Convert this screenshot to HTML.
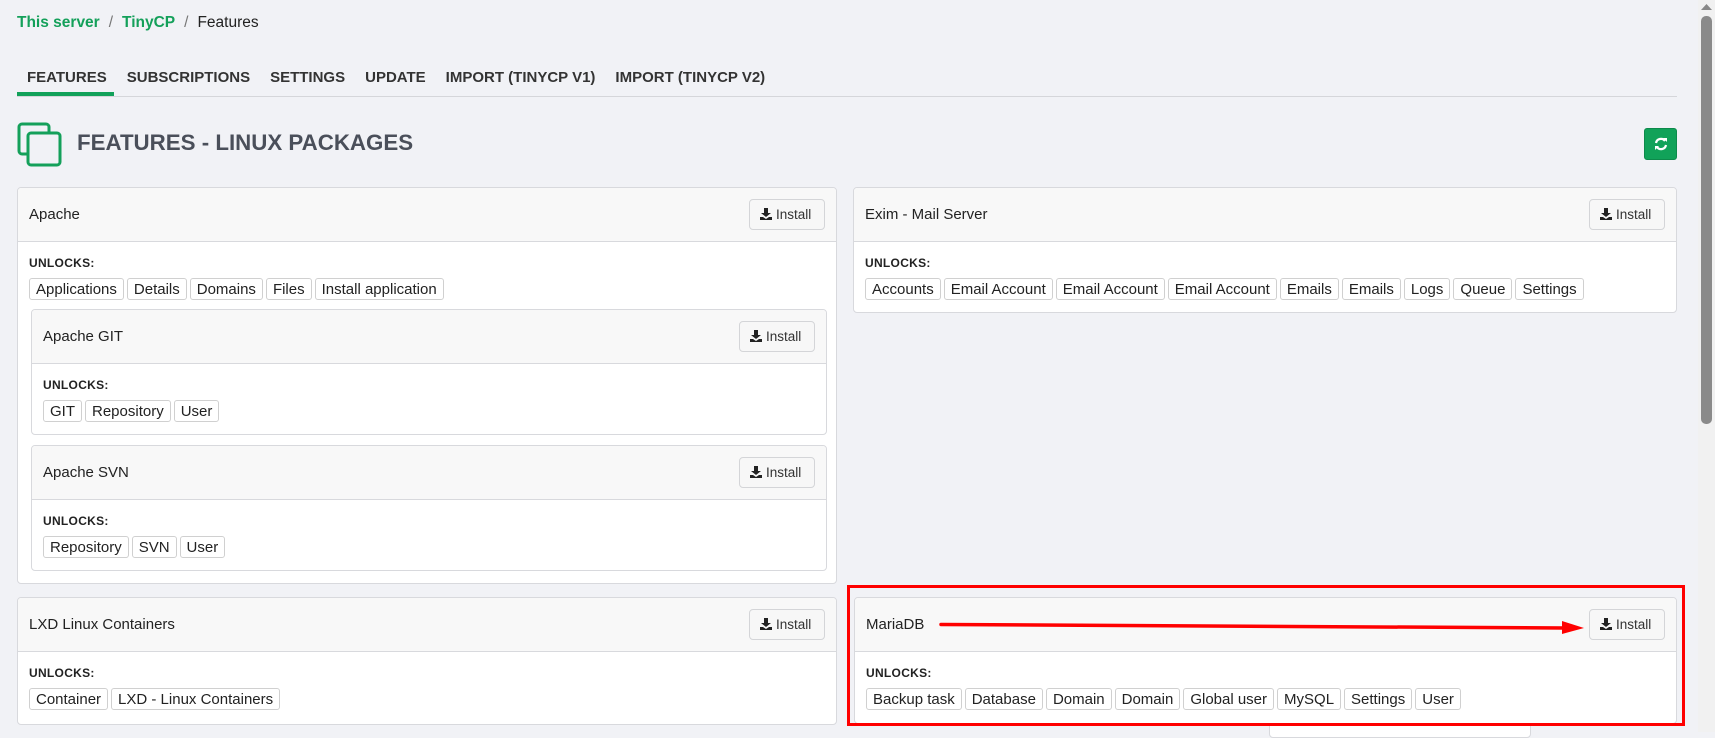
<!DOCTYPE html>
<html><head><meta charset="utf-8"><style>
*{box-sizing:border-box;margin:0;padding:0}
body{width:1715px;height:732px;overflow:hidden;background:#f1f2f6;font-family:"Liberation Sans","DejaVu Sans",sans-serif;color:#222;position:relative}
.a{position:absolute}
.bc{left:17px;top:14px;font-size:15.5px;font-weight:bold}
.bc .g{color:#14a05a}.bc .s{color:#777;font-weight:normal;margin:0 9px}.bc .c{color:#222;font-weight:normal}
.tabs{left:17px;top:69px;font-size:15px;font-weight:bold;color:#333;white-space:nowrap}
.tabs span{padding:0 10px;display:inline-block}
.line{left:17px;top:96px;width:1660px;height:1px;background:#d5d6da}
.ul{left:17px;top:92px;width:97px;height:4px;background:#12a15a}
.title{left:77px;top:130px;font-size:22.3px;font-weight:bold;color:#4a4f5a}
.ref{left:1644px;top:128px;width:33px;height:32px;background:#11a259;border-radius:3px;border:1px solid #0d8a4b}
.card{position:absolute;background:#fff;border:1px solid #d8d9dd;border-radius:4px;overflow:hidden}
.hd{height:54px;background:#f8f8f8;border-bottom:1px solid #d8d9dd;position:relative;font-size:15px;color:#222;padding:18px 0 0 11px}
.btn{position:absolute;right:11px;top:11px;width:76px;height:31px;border:1px solid #d4d5d8;border-radius:4px;background:#f7f7f7;font-size:13.5px;color:#333;padding:7px 0 0 26px}
.btn svg{position:absolute;left:10px;top:8px}
.bd{padding:14px 11px 0 11px}
.lb{font-size:12px;font-weight:bold;color:#222;letter-spacing:.3px;height:22px}
.tg{display:flex;gap:3px}
.tg span{border:1px solid #d0d0d0;border-radius:3px;font-size:15px;padding:1px 6px;height:22px;line-height:19px;color:#222;background:#fff}
</style></head><body>
<div class="a bc"><span class="g">This server</span><span class="s">/</span><span class="g">TinyCP</span><span class="s">/</span><span class="c">Features</span></div>
<div class="a tabs"><span>FEATURES</span><span>SUBSCRIPTIONS</span><span>SETTINGS</span><span>UPDATE</span><span>IMPORT (TINYCP V1)</span><span>IMPORT (TINYCP V2)</span></div>
<div class="a line"></div><div class="a ul"></div>
<svg class="a" style="left:17px;top:122px" width="46" height="46" viewBox="0 0 46 46"><rect x="2" y="2" width="30" height="30" rx="3" fill="none" stroke="#14a05a" stroke-width="3"/><rect x="11" y="11" width="32" height="32" rx="3" fill="#f1f2f6" stroke="#14a05a" stroke-width="3"/></svg>
<div class="a title">FEATURES - LINUX PACKAGES</div>
<div class="a ref"><svg style="position:absolute;left:9px;top:8px" width="14" height="14" viewBox="0 0 14 14"><path d="M2 6A5 5 0 0 1 11 4M12 8A5 5 0 0 1 3 10" stroke="#fff" stroke-width="2.2" fill="none"/><path d="M9 1L13 1L13 5Z M1 13L1 9L5 9Z" fill="#fff"/></svg></div>

<div class="card" style="left:17px;top:187px;width:820px;height:397px">
<div class="hd">Apache<div class="btn"><svg width="12" height="12" viewBox="0 0 12 12"><path d="M4 0h4v5h3L6 9 1 5h3z M0 9h3l3 2 3-2h3v3H0z" fill="#222"/></svg>Install</div></div>
<div class="bd"><div class="lb">UNLOCKS:</div><div class="tg"><span>Applications</span><span>Details</span><span>Domains</span><span>Files</span><span>Install application</span></div></div>
</div>
<div class="card" style="left:31px;top:309px;width:796px;height:126px">
<div class="hd">Apache GIT<div class="btn"><svg width="12" height="12" viewBox="0 0 12 12"><path d="M4 0h4v5h3L6 9 1 5h3z M0 9h3l3 2 3-2h3v3H0z" fill="#222"/></svg>Install</div></div>
<div class="bd"><div class="lb">UNLOCKS:</div><div class="tg"><span>GIT</span><span>Repository</span><span>User</span></div></div>
</div>
<div class="card" style="left:31px;top:445px;width:796px;height:126px">
<div class="hd">Apache SVN<div class="btn"><svg width="12" height="12" viewBox="0 0 12 12"><path d="M4 0h4v5h3L6 9 1 5h3z M0 9h3l3 2 3-2h3v3H0z" fill="#222"/></svg>Install</div></div>
<div class="bd"><div class="lb">UNLOCKS:</div><div class="tg"><span>Repository</span><span>SVN</span><span>User</span></div></div>
</div>
<div class="card" style="left:17px;top:597px;width:820px;height:128px">
<div class="hd">LXD Linux Containers<div class="btn"><svg width="12" height="12" viewBox="0 0 12 12"><path d="M4 0h4v5h3L6 9 1 5h3z M0 9h3l3 2 3-2h3v3H0z" fill="#222"/></svg>Install</div></div>
<div class="bd"><div class="lb">UNLOCKS:</div><div class="tg"><span>Container</span><span>LXD - Linux Containers</span></div></div>
</div>
<div class="card" style="left:853px;top:187px;width:824px;height:126px">
<div class="hd">Exim - Mail Server<div class="btn"><svg width="12" height="12" viewBox="0 0 12 12"><path d="M4 0h4v5h3L6 9 1 5h3z M0 9h3l3 2 3-2h3v3H0z" fill="#222"/></svg>Install</div></div>
<div class="bd"><div class="lb">UNLOCKS:</div><div class="tg"><span>Accounts</span><span>Email Account</span><span>Email Account</span><span>Email Account</span><span>Emails</span><span>Emails</span><span>Logs</span><span>Queue</span><span>Settings</span></div></div>
</div>
<div class="card" style="left:1269px;top:718px;width:262px;height:20px"></div>
<div class="card" style="left:854px;top:597px;width:823px;height:127px">
<div class="hd">MariaDB<div class="btn"><svg width="12" height="12" viewBox="0 0 12 12"><path d="M4 0h4v5h3L6 9 1 5h3z M0 9h3l3 2 3-2h3v3H0z" fill="#222"/></svg>Install</div></div>
<div class="bd"><div class="lb">UNLOCKS:</div><div class="tg"><span>Backup task</span><span>Database</span><span>Domain</span><span>Domain</span><span>Global user</span><span>MySQL</span><span>Settings</span><span>User</span></div></div>
</div>
<div class="a" style="left:847px;top:585px;width:838px;height:141px;border:3px solid #f00"></div>
<svg class="a" style="left:0;top:0" width="1715" height="732"><path d="M941 624.5L1565 628" stroke="#f00" stroke-width="3.5" stroke-linecap="round"/><path d="M1562 621L1584 628L1562 634Z" fill="#f00"/></svg>
<div class="a" style="left:1698px;top:0;width:17px;height:732px;background:#f1f1f1"></div>
<div class="a" style="left:1701px;top:16px;width:11px;height:408px;background:#8a8a8a;border-radius:5px"></div>
<svg class="a" style="left:1700px;top:3px" width="13" height="8"><path d="M1 7L6.5 1L12 7Z" fill="#888"/></svg>
</body></html>
